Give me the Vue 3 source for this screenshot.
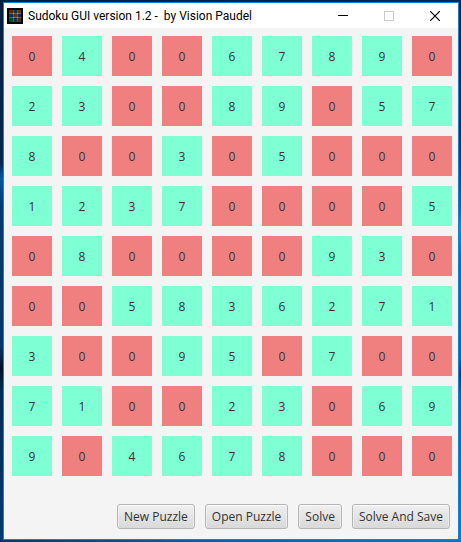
<script setup>
import { ref } from 'vue'

const rows = ref([
  [0, 4, 0, 0, 6, 7, 8, 9, 0],
  [2, 3, 0, 0, 8, 9, 0, 5, 7],
  [8, 0, 0, 3, 0, 5, 0, 0, 0],
  [1, 2, 3, 7, 0, 0, 0, 0, 5],
  [0, 8, 0, 0, 0, 0, 9, 3, 0],
  [0, 0, 5, 8, 3, 6, 2, 7, 1],
  [3, 0, 0, 9, 5, 0, 7, 0, 0],
  [7, 1, 0, 0, 2, 3, 0, 6, 9],
  [9, 0, 4, 6, 7, 8, 0, 0, 0],
])

const actions = ['New Puzzle', 'Open Puzzle', 'Solve', 'Solve And Save']
</script>

<template>
  <div class="desktop">
    <main class="window">
      <header class="titlebar">
        <svg class="app-icon" viewBox="0 0 16 16" shape-rendering="crispEdges" aria-hidden="true">
          <rect width="16" height="16" fill="#000" />
          <rect x="2" y="2" width="12" height="12" fill="#063450" />
          <rect x="2" y="2" width="4" height="4" fill="#5c2a0a" />
          <rect x="10" y="2" width="4" height="4" fill="#6a300a" />
          <rect x="6" y="6" width="4" height="4" fill="#6a300a" />
          <rect x="2" y="10" width="4" height="4" fill="#0a4a24" />
          <rect x="10" y="10" width="4" height="4" fill="#5c2a0a" />
          <rect x="2" y="5" width="4" height="1" fill="#a8541a" />
          <rect x="6" y="5" width="4" height="1" fill="#1478a8" />
          <rect x="10" y="5" width="4" height="1" fill="#b85c1a" />
          <rect x="2" y="9" width="4" height="1" fill="#1478a8" />
          <rect x="6" y="9" width="4" height="1" fill="#b85c1a" />
          <rect x="10" y="9" width="4" height="1" fill="#1478a8" />
          <rect x="6" y="2" width="1" height="12" fill="#12804a" />
          <rect x="10" y="2" width="1" height="12" fill="#12804a" />
          <rect x="6" y="5" width="1" height="1" fill="#ff9a40" />
          <rect x="10" y="9" width="1" height="1" fill="#ff9a40" />
          <rect x="10" y="5" width="1" height="1" fill="#38b8e8" />
          <rect x="6" y="9" width="1" height="1" fill="#38b8e8" />
        </svg>
        <h1 class="title">Sudoku GUI version 1.2 -&nbsp; by Vision Paudel</h1>
        <div class="controls">
          <button type="button" class="control" aria-label="Minimize">
            <svg viewBox="0 0 10 10" shape-rendering="crispEdges"><rect y="4" width="10" height="1" fill="#000" /></svg>
          </button>
          <button type="button" class="control" aria-label="Maximize" disabled>
            <svg viewBox="0 0 10 10" shape-rendering="crispEdges"><rect x=".5" y=".5" width="9" height="9" fill="none" stroke="#ccc" /></svg>
          </button>
          <button type="button" class="control" aria-label="Close">
            <svg viewBox="0 0 10 10"><path d="M0 0L10 10M10 0L0 10" stroke="#000" stroke-width="1.2" /></svg>
          </button>
        </div>
      </header>

      <section class="content">
        <div class="board">
          <template v-for="(row, r) in rows" :key="r">
            <div v-for="(value, c) in row" :key="c" class="cell" :class="{ empty: value === 0 }">{{ value }}</div>
          </template>
        </div>
        <div class="actions">
          <button v-for="label in actions" :key="label" type="button" class="action">{{ label }}</button>
        </div>
      </section>
    </main>
  </div>
</template>

<style>
body {
  margin: 0;
}
</style>

<style scoped>
.desktop {
  box-sizing: border-box;
  min-height: 100vh;
  padding: 2px 2px 2px 3px;
  display: flex;
  font-family: "Open Sans", "Noto Sans", sans-serif;
  font-size: 12px;
  background:
    linear-gradient(90deg, #001f42, #00254f 60%, #002a58) top / 100% 2px no-repeat,
    linear-gradient(90deg, #003a70, #0064b4 50%, #0078cc) bottom / 100% 2px no-repeat,
    linear-gradient(180deg, #001f42 0, #002850 30%, #0058a4 33%, #003a74 38%, #003668 64%, #001226 68%, #002a58 72%, #003a70 100%) left / 3px 100% no-repeat,
    linear-gradient(180deg, #002448 0, #00305e 25%, #0068b8 38%, #0090d8 42%, #0070c4 48%, #0068b8 66%, #003c78 69%, #0068b8 73%, #0080d0 100%) right / 2px 100% no-repeat;
}

.window {
  flex: 1;
  min-width: 0;
  display: flex;
  flex-direction: column;
  border: 1px solid #1580d8;
  background: #f4f4f4;
}

.titlebar {
  display: flex;
  align-items: center;
  height: 25px;
  padding-left: 3px;
  background: #fff;
}

.app-icon {
  width: 16px;
  height: 16px;
  flex: none;
}

.title {
  flex: 1;
  margin: 0 0 0 5px;
  font-family: Roboto, "Open Sans", sans-serif;
  font-size: 12px;
  font-weight: 400;
  line-height: 16px;
  white-space: nowrap;
  color: #000;
}

.controls {
  display: flex;
}

.control {
  width: 46px;
  height: 25px;
  padding: 0;
  border: 0;
  background: transparent;
  display: grid;
  place-items: center;
}

.control svg {
  width: 10px;
  height: 10px;
}

.content {
  flex: 1;
  display: flex;
  flex-direction: column;
  gap: 28px;
  padding: 8px 6px 10px 8px;
}

.board {
  display: grid;
  grid-template-columns: repeat(9, minmax(0, 1fr));
  grid-auto-rows: 40px;
  gap: 10px;
}

.cell {
  display: flex;
  align-items: center;
  justify-content: center;
  background: #7fffd4;
  color: #333;
}

.cell.empty {
  background: #f08080;
}

.actions {
  display: flex;
  justify-content: flex-end;
  gap: 10px;
  padding-right: 2px;
}

.action {
  height: 25px;
  padding: 0 6px;
  border: 1px solid #b5b5b5;
  border-radius: 3px;
  background: linear-gradient(#efefef, #d9d9d9);
  box-shadow: inset 0 1px 0 #fafafa, inset 1px 0 0 #ececec, inset -1px 0 0 #ececec;
  font-family: inherit;
  font-size: 12px;
  line-height: 16px;
  white-space: nowrap;
  color: #333;
}
</style>
